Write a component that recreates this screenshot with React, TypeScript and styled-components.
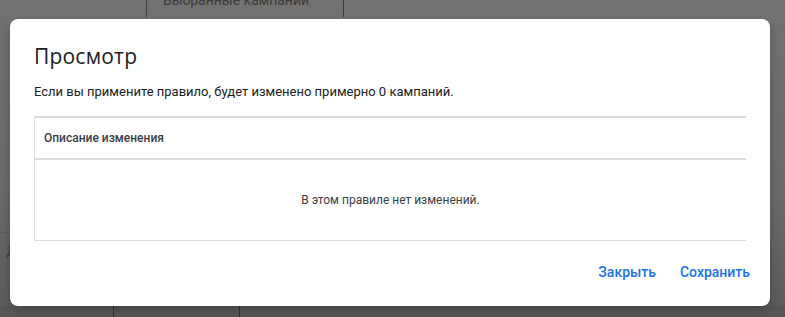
import styled, { createGlobalStyle } from "styled-components";

const GlobalStyle = createGlobalStyle`
  html, body {
    margin: 0;
    padding: 0;
    height: 100%;
    overflow: hidden;
  }
  body {
    font-family: Roboto, "Liberation Sans", Arial, sans-serif;
    background: #6f6f6f;
  }
`;

const Page = styled.div`
  position: relative;
  width: 785px;
  height: 317px;
  overflow: hidden;
  background: linear-gradient(#727272 0%, #6b6b6b 60%, #5a5a5a 100%);
`;

const TopStrip = styled.div`
  display: flex;
  height: 17px;
  padding-left: 146px;
`;

const Tab = styled.div`
  box-sizing: border-box;
  width: 198px;
  border-left: 1px solid #3e3e3e;
  border-right: 1px solid #3e3e3e;
  color: #3c3c3c;
  font-size: 14px;
  line-height: 0;
  padding-left: 16px;
  overflow: hidden;
  white-space: nowrap;
`;

const SideRows = styled.div`
  position: absolute;
  left: 0;
  top: 216px;
  width: 20px;
  display: flex;
  flex-direction: column;
`;

const SideRow = styled.div<{ h: number }>`
  height: ${(p) => p.h}px;
  border-bottom: 1px solid #5e5e5e;
  color: #444;
  font-size: 14px;
  line-height: ${(p) => p.h}px;
  padding-left: 6px;
`;

const BottomStrip = styled.div`
  position: absolute;
  left: 0;
  right: 0;
  bottom: 0;
  height: 11px;
  display: flex;
  background: #575757;
`;

const BottomCell = styled.div<{ w: number }>`
  width: ${(p) => p.w}px;
  border-right: 1px solid #333;
`;

const Dialog = styled.div`
  position: absolute;
  left: 10px;
  top: 19px;
  width: 760px;
  height: 287px;
  box-sizing: border-box;
  background: #fff;
  border-radius: 8px;
  padding: 23px 24px 0 24px;
  display: flex;
  flex-direction: column;
  box-shadow: 0 4px 10px rgba(0, 0, 0, 0.25);
`;

const Title = styled.h2`
  margin: 0;
  font-family: "Open Sans", Roboto, sans-serif;
  font-weight: 400;
  font-size: 21px;
  line-height: 28px;
  color: #202124;
  letter-spacing: 0.2px;
`;

const Lead = styled.p`
  margin: 12px 0 0 0;
  font-size: 13px;
  line-height: 20px;
  color: #202124;
`;

const Table = styled.div`
  margin-top: 14px;
  border-top: 2px solid #dadce0;
  border-left: 1px solid #dadce0;
  border-bottom: 1px solid #dadce0;
  display: flex;
  flex-direction: column;
`;

const HeadRow = styled.div`
  height: 40px;
  border-bottom: 2px solid #dadce0;
  display: flex;
  align-items: center;
  padding-left: 9px;
  font-size: 12px;
  font-weight: 500;
  color: #3c4043;
`;

const EmptyRow = styled.div`
  height: 80px;
  display: flex;
  align-items: center;
  justify-content: center;
  font-size: 12px;
  color: #3c4043;
`;

const Actions = styled.div`
  display: flex;
  justify-content: flex-end;
  gap: 8px;
  margin-top: 13px;
  margin-right: -12px;
`;

const TextButton = styled.button`
  border: none;
  background: none;
  padding: 8px 8px;
  font-family: Roboto, "Liberation Sans", Arial, sans-serif;
  font-size: 14px;
  font-weight: 500;
  line-height: 20px;
  color: #1a73e8;
  cursor: pointer;
`;

export default function App() {
  return (
    <>
      <GlobalStyle />
      <Page>
        <TopStrip>
          <Tab>Выбранные кампании</Tab>
        </TopStrip>
        <SideRows>
          <SideRow h={16}></SideRow>
          <SideRow h={36}>Д</SideRow>
          <SideRow h={16}></SideRow>
        </SideRows>
        <BottomStrip>
          <BottomCell w={113} />
          <BottomCell w={125} />
        </BottomStrip>
        <Dialog>
          <Title>Просмотр</Title>
          <Lead>
            Если вы примените правило, будет изменено примерно 0 кампаний.
          </Lead>
          <Table>
            <HeadRow>Описание изменения</HeadRow>
            <EmptyRow>В этом правиле нет изменений.</EmptyRow>
          </Table>
          <Actions>
            <TextButton>Закрыть</TextButton>
            <TextButton>Сохранить</TextButton>
          </Actions>
        </Dialog>
      </Page>
    </>
  );
}
